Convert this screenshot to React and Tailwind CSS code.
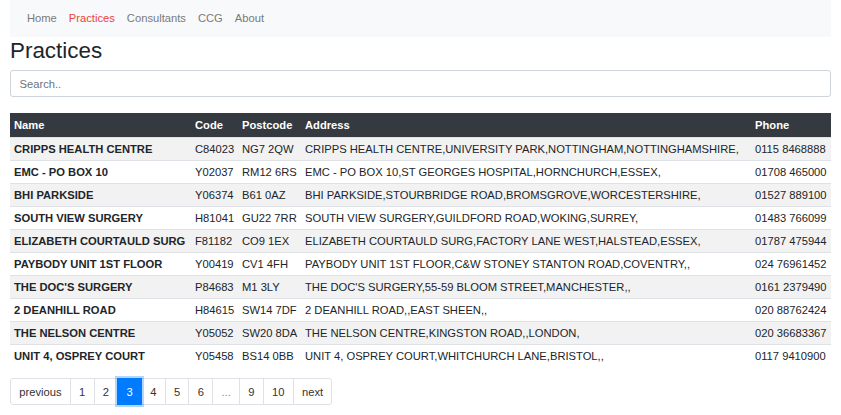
import React from 'react';

const practices = [
    ['CRIPPS HEALTH CENTRE', 'C84023', 'NG7 2QW', 'CRIPPS HEALTH CENTRE,UNIVERSITY PARK,NOTTINGHAM,NOTTINGHAMSHIRE,', '0115 8468888'],
    ['EMC - PO BOX 10', 'Y02037', 'RM12 6RS', 'EMC - PO BOX 10,ST GEORGES HOSPITAL,HORNCHURCH,ESSEX,', '01708 465000'],
    ['BHI PARKSIDE', 'Y06374', 'B61 0AZ', 'BHI PARKSIDE,STOURBRIDGE ROAD,BROMSGROVE,WORCESTERSHIRE,', '01527 889100'],
    ['SOUTH VIEW SURGERY', 'H81041', 'GU22 7RR', 'SOUTH VIEW SURGERY,GUILDFORD ROAD,WOKING,SURREY,', '01483 766099'],
    ['ELIZABETH COURTAULD SURG', 'F81182', 'CO9 1EX', 'ELIZABETH COURTAULD SURG,FACTORY LANE WEST,HALSTEAD,ESSEX,', '01787 475944'],
    ['PAYBODY UNIT 1ST FLOOR', 'Y00419', 'CV1 4FH', 'PAYBODY UNIT 1ST FLOOR,C&W STONEY STANTON ROAD,COVENTRY,,', '024 76961452'],
    ["THE DOC'S SURGERY", 'P84683', 'M1 3LY', "THE DOC'S SURGERY,55-59 BLOOM STREET,MANCHESTER,,", '0161 2379490'],
    ['2 DEANHILL ROAD', 'H84615', 'SW14 7DF', '2 DEANHILL ROAD,,EAST SHEEN,,', '020 88762424'],
    ['THE NELSON CENTRE', 'Y05052', 'SW20 8DA', 'THE NELSON CENTRE,KINGSTON ROAD,,LONDON,', '020 36683367'],
    ['UNIT 4, OSPREY COURT', 'Y05458', 'BS14 0BB', 'UNIT 4, OSPREY COURT,WHITCHURCH LANE,BRISTOL,,', '0117 9410900'],
];

const navItems = ['Home', 'Practices', 'Consultants', 'CCG', 'About'];
const pages = ['previous', '1', '2', '3', '4', '5', '6', '...', '9', '10', 'next'];

export default function App() {
    return (
        <div className="px-[10px] text-[11.2px] leading-[16px] text-[#212529] bg-white min-h-screen" style={{ fontFamily: '"Liberation Sans", Arial, sans-serif' }}>
            {/* navbar */}
            <nav className="bg-[#f8f9fa] h-[37px] flex items-center px-[11px] pb-[2px]">
                {navItems.map(item => (
                    <a
                        key={item}
                        className={`px-[6px] ${item === 'Practices' ? 'text-[#e8453c]' : 'text-[#7a7a7a]'}`}
                    >
                        {item}
                    </a>
                ))}
            </nav>

            <h2 className="text-[22.4px] leading-[26px] mt-[1px] mb-[6px] font-normal">Practices</h2>

            <input
                type="text"
                placeholder="Search.."
                className="block w-full h-[27px] px-[8.5px] border border-[#ced4da] rounded-[3px] text-[11.2px] placeholder:text-[#6c757d] outline-none"
            />

            <table className="w-full table-fixed border-collapse mt-[16px]">
                <colgroup>
                    <col className="w-[181px]" />
                    <col className="w-[47px]" />
                    <col className="w-[63px]" />
                    <col />
                    <col className="w-[80px]" />
                </colgroup>
                <thead>
                    <tr className="bg-[#343a40] text-white">
                        {['Name', 'Code', 'Postcode', 'Address', 'Phone'].map(h => (
                            <th key={h} className="text-left font-bold px-[4px] py-[4px] whitespace-nowrap">{h}</th>
                        ))}
                    </tr>
                </thead>
                <tbody>
                    {practices.map((row, i) => (
                        <tr key={row[1]} className={`border-t border-[#dee2e6] ${i % 2 === 0 ? 'bg-[#f2f2f2]' : 'bg-white'}`}>
                            <td className="px-[4px] py-[3px] font-bold whitespace-nowrap overflow-hidden">{row[0]}</td>
                            <td className="px-[4px] py-[3px] whitespace-nowrap">{row[1]}</td>
                            <td className="px-[4px] py-[3px] whitespace-nowrap">{row[2]}</td>
                            <td className="px-[4px] py-[3px] whitespace-nowrap overflow-hidden">{row[3]}</td>
                            <td className="px-[4px] py-[3px] whitespace-nowrap">{row[4]}</td>
                        </tr>
                    ))}
                </tbody>
            </table>

            {/* pagination */}
            <div className="flex mt-[11px]">
                {pages.map((p, i) => {
                    const active = p === '3';
                    return (
                        <a
                            key={p}
                            className={`h-[27px] flex items-center px-[8.25px] border ${i > 0 ? '-ml-px' : ''} ${
                                i === 0 ? 'rounded-l-[3px]' : ''
                            } ${i === pages.length - 1 ? 'rounded-r-[3px]' : ''} ${
                                active
                                    ? 'bg-[#007bff] border-[#007bff] text-white relative z-10 shadow-[0_0_0_2px_rgba(0,123,255,0.3)]'
                                    : p === '...'
                                    ? 'bg-white border-[#dee2e6] text-[#8a8a8a]'
                                    : 'bg-white border-[#dee2e6] text-[#333]'
                            }`}
                        >
                            {p}
                        </a>
                    );
                })}
            </div>
        </div>
    );
}
